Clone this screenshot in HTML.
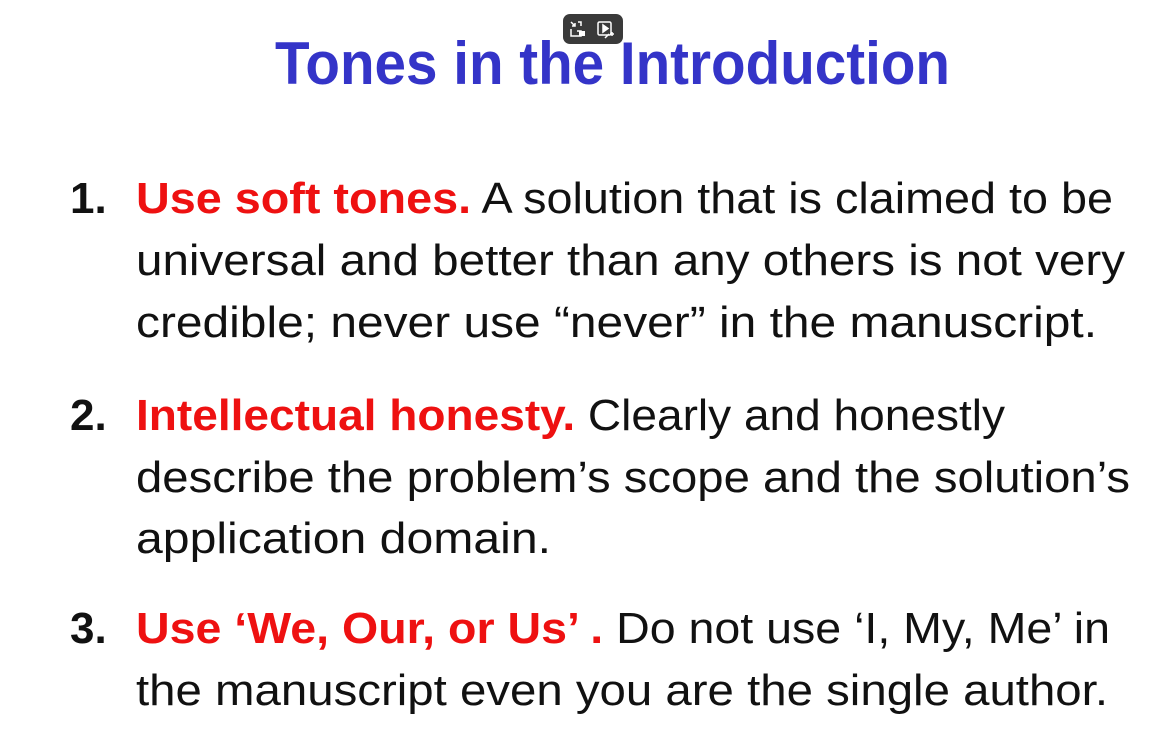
<!DOCTYPE html>
<html><head><meta charset="utf-8"><style>
html,body{margin:0;padding:0;background:#fff;width:1176px;height:753px;overflow:hidden;position:relative;font-family:"Liberation Sans",Arial,sans-serif}
.l{position:absolute;white-space:nowrap;font-size:44px;color:#111;transform-origin:0 0;line-height:normal}
.r{color:#ee1111;font-weight:bold}
.n{font-weight:bold}
#t{position:absolute;left:275px;top:29px;font-size:60px;font-weight:bold;color:#3434c8;white-space:nowrap;transform-origin:0 0;line-height:normal}
.ic{position:absolute;left:563px;top:14px;width:60px;height:30px;background:#3a3a3a;border-radius:7px}
</style></head><body>
<div id="t" data-w="675">Tones in the Introduction</div>
<div class="ic"><svg width="60" height="30" viewBox="0 0 60 30" fill="none" stroke="#fff" stroke-width="1.5">
<path d="M8 8 l4 4 M12 9 v3 h-3"/><path d="M8 15 v7 h10 v-5 h-4"/><path d="M15 8 h3 v4"/>
<rect x="16" y="17" width="6" height="5" fill="#fff" stroke="none"/>
<rect x="35" y="8" width="13" height="13" rx="1.5"/><path d="M40 11 l5 3.5 -5 3.5z" fill="#fff"/><path d="M46 20 l-4 4 M49 18 v4 M47 20 h4"/></svg></div>
<div class="n l" style="left:70px;top:174px">1.</div>
<div class="l" style="left:136px;top:174px" data-w="977"><span class="r">Use soft tones.</span> A solution that is claimed to be</div>
<div class="l" style="left:136px;top:236px" data-w="989">universal and better than any others is not very</div>
<div class="l" style="left:136px;top:298px" data-w="961">credible; never use “never” in the manuscript.</div>
<div class="n l" style="left:70px;top:391px">2.</div>
<div class="l" style="left:136px;top:391px" data-w="869"><span class="r">Intellectual honesty.</span> Clearly and honestly</div>
<div class="l" style="left:136px;top:453px" data-w="994">describe the problem’s scope and the solution’s</div>
<div class="l" style="left:136px;top:514px" data-w="415">application domain.</div>
<div class="n l" style="left:70px;top:604px">3.</div>
<div class="l" style="left:136px;top:604px" data-w="974"><span class="r">Use ‘We, Our, or Us’ .</span> Do not use ‘I, My, Me’ in</div>
<div class="l" style="left:136px;top:666px" data-w="972">the manuscript even you are the single author.</div>
<script>
document.querySelectorAll('[data-w]').forEach(function(e){var w=e.getBoundingClientRect().width;var t=+e.getAttribute('data-w');if(w>0)e.style.transform='scaleX('+(t/w)+')';});
</script>
</body></html>
